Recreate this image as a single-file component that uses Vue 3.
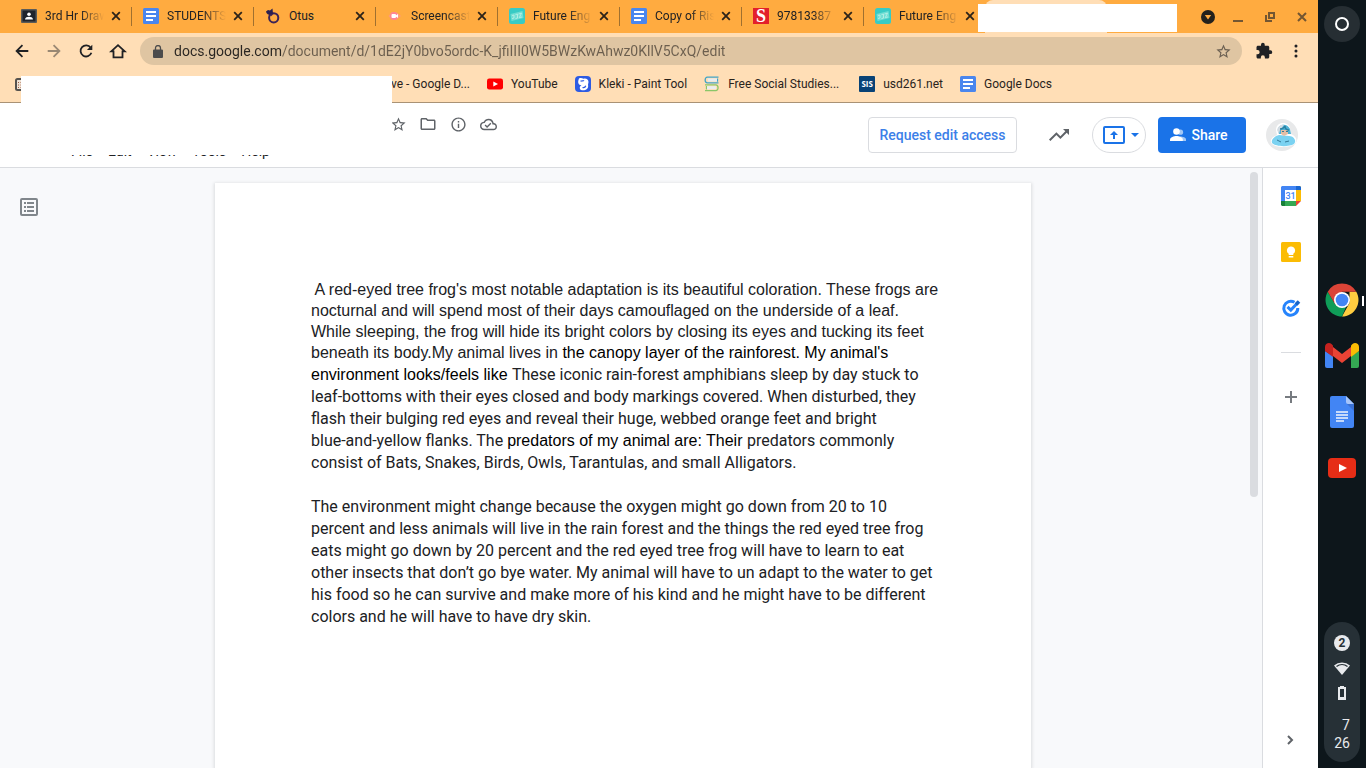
<template>
  <div class="screen">
    <!-- shared icon shapes -->
    <svg class="sprite" aria-hidden="true">
      <symbol id="classroom" viewBox="0 0 16 16">
        <rect y="1" width="16" height="14" rx="1" fill="#5b5b58" />
        <rect x="1.5" y="2.5" width="13" height="11" fill="#20242c" />
        <circle cx="8" cy="6.3" r="1.8" fill="#fff" />
        <path d="M4 11.5c0-2 2.4-2.7 4-2.7s4 .7 4 2.7z" fill="#fff" />
      </symbol>
      <symbol id="docs" viewBox="0 0 16 16">
        <rect width="16" height="16" rx="1.5" fill="#4a86ee" />
        <path d="M3 3h10v2H3zM3 7h10v2H3zM3 11h7v2H3z" fill="#fff" />
      </symbol>
      <symbol id="otus" viewBox="0 0 16 16">
        <circle cx="8.7" cy="9.8" r="4.6" fill="none" stroke="#3b2357" stroke-width="2" />
        <path d="M1 3.5 3 2l2 .5L7.5.5 8 5.5 5.5 7 3 6.5 1.5 5z" fill="#2b2050" />
        <path d="m4.5 6 4 .3-2.5 2z" fill="#3b2357" />
      </symbol>
      <symbol id="screencast" viewBox="0 0 16 16">
        <path d="m1.5 8 3-3.500h5L14 8l-4.500 3.500h-5z" fill="#ff9a7c" />
        <circle cx="7" cy="8" r="4" fill="#ff8592" />
        <rect x="4.5" y="6" width="4.5" height="4" rx="1" fill="#fff" />
        <path d="m8 8 3-2v4z" fill="#fff" />
      </symbol>
      <symbol id="future" viewBox="0 0 16 16">
        <rect width="16" height="16" rx="2.5" fill="#38cbc5" />
        <path d="m1.5 6 12-3 1 7-12 3z" fill="#71ded4" />
        <path d="m3 7.5 2-.5v3l-2 .6m3.5-4 2-.5v4l-2 .4m3-4.5 3-.8-2.2 4.4 2.6-.6" fill="none" stroke="#bff3e8" stroke-width=".8" />
      </symbol>
      <symbol id="youtube" viewBox="0 0 16 16">
        <rect y="2.5" width="16" height="11" rx="2.2" fill="#f00" />
        <path d="M6.3 5.5v5L11 8z" fill="#fff" />
      </symbol>
      <symbol id="kleki" viewBox="0 0 16 16">
        <rect width="16" height="16" rx="4" fill="#2d5be3" />
        <path d="M4 2.5c1.5-.8 3-.5 4.5.3 2.5-.8 5 .6 5 3.2 0 1.2-.7 2-.4 3.5.6 3.5-3 5.5-7.1 4.5-2-1.7-1.4-4 .8-4.8C3.5 9.5 2.2 6.5 4 2.5z" fill="#fff" />
        <path d="M5.5 5.2c1.5-1 2.5.2 3.5-.8M7.5 11.5c1.8.5 2.8-.2 3.3-1.7" fill="none" stroke="#2d5be3" stroke-width="1.2" />
      </symbol>
      <symbol id="books" viewBox="0 0 16 16">
        <path d="M14.5 1.2H3.4C.4 1.2.4 6.8 3.4 6.8h11.1M13.5 2.4v3.3" fill="none" stroke="#40a4c7" stroke-width="1.3" />
        <path d="M4 2.5h9v3H4z" fill="#e9edf0" />
        <path d="M1 8.8h10.8c3 0 3 5.8 0 5.8H1M2.5 10v3.4" fill="none" stroke="#8bc668" stroke-width="1.3" />
        <path d="M3 10.2h9v3H3z" fill="#e9edf0" />
      </symbol>
      <symbol id="site" viewBox="0 0 16 16">
        <rect x="2" y="3" width="14" height="11" rx="1.5" fill="#efe2d4" stroke="#55524e" stroke-width="2" />
        <path d="M4 6.5h8M4 9h8M4 11.5h8" stroke="#a05a40" stroke-dasharray="1 1.5" />
      </symbol>
      <symbol id="star" viewBox="0 0 24 24">
        <path d="m22 9.24-7.19-.62L12 2 9.19 8.63 2 9.24l5.46 4.73L5.82 21 12 17.27 18.18 21l-1.63-7.03zM12 15.4l-3.76 2.27 1-4.28-3.32-2.88 4.38-.38L12 6.1l1.71 4.04 4.38.38-3.32 2.88 1 4.28z" />
      </symbol>
    </svg>

    <div class="window">
      <div class="tab-strip">
        <div v-for="(tab, i) in tabs" :key="i" class="tab">
          <span v-if="tab.letters" :class="['favicon', tab.icon]">{{ tab.letters }}</span>
          <svg v-else class="favicon"><use :href="'#' + tab.icon" /></svg>
          <span :class="['tab-title', { short: tab.title.length < 6 }]">{{ tab.title }}</span>
          <button class="tab-close" aria-label="Close tab">
            <svg width="10" height="10" viewBox="0 0 10 10"><path d="m1.2 1.2 7.6 7.6m0-7.6L1.2 8.8" /></svg>
          </button>
        </div>
        <div class="tab active"></div>
        <div class="blank blank-tab"></div>
        <div class="window-controls">
          <button class="search-tabs" aria-label="Search tabs">
            <svg width="14" height="14" viewBox="0 0 14 14"><circle cx="7" cy="7" r="7" fill="#24211c" /><path d="M3.8 5h6.4L7 9.4z" fill="#ffab40" /></svg>
          </button>
          <button aria-label="Minimize"><svg width="10" height="10" viewBox="0 0 10 10"><path d="M0 9h10" /></svg></button>
          <button aria-label="Restore">
            <svg width="10" height="10" viewBox="0 0 10 10"><path d="M4 1h5v5H4zM1 3v6h6" /></svg>
          </button>
          <button aria-label="Close"><svg width="10" height="10" viewBox="0 0 10 10"><path d="m1 1 8 8m0-8L1 9" /></svg></button>
        </div>
      </div>

      <div class="toolbar">
        <button class="tool" aria-label="Back"><svg viewBox="0 0 20 20"><path d="M17 10H4m6.5-6.5L4 10l6.5 6.5" /></svg></button>
        <button class="tool dim" aria-label="Forward"><svg viewBox="0 0 20 20"><path d="M3 10h13M9.5 3.5 16 10l-6.5 6.5" /></svg></button>
        <button class="tool" aria-label="Reload">
          <svg viewBox="0 0 20 20"><path d="M15.2 6.3A6.2 6.2 0 1 0 16 12" /><path d="M17 3v6h-6z" class="solid" /></svg>
        </button>
        <button class="tool" aria-label="Home"><svg viewBox="0 0 20 20"><path d="m2.5 10.5 7.5-7 7.5 7H15V17H5v-6.5z" /></svg></button>
        <div class="omnibox">
          <svg class="lock" width="10" height="13" viewBox="0 0 10 13"><path d="M1 4.5h8a1 1 0 0 1 1 1V12a1 1 0 0 1-1 1H1a1 1 0 0 1-1-1V5.5a1 1 0 0 1 1-1z" /><path d="M2.5 5V3a2.5 2.5 0 0 1 5 0v2" fill="none" stroke="#4c4c4c" stroke-width="1.3" /></svg>
          <input v-model="url" class="url" type="text" aria-label="Address" spellcheck="false" />
          <button class="bookmark-star" aria-label="Bookmark this page"><svg width="17" height="17"><use href="#star" /></svg></button>
        </div>
        <button class="tool" aria-label="Extensions">
          <svg class="fill" viewBox="0 0 24 24"><path d="M20.5 11H19V7c0-1.1-.9-2-2-2h-4V3.5a2.5 2.5 0 0 0-5 0V5H4c-1.1 0-2 .9-2 2v3.8h1.5a2.7 2.7 0 0 1 0 5.4H2V20c0 1.1.9 2 2 2h3.8v-1.5a2.7 2.7 0 0 1 5.4 0V22H17c1.1 0 2-.9 2-2v-4h1.5a2.5 2.5 0 0 0 0-5z" /></svg>
        </button>
        <button class="tool" aria-label="Menu">
          <svg class="fill" viewBox="0 0 20 20"><circle cx="10" cy="4.5" r="1.7" /><circle cx="10" cy="10" r="1.7" /><circle cx="10" cy="15.5" r="1.7" /></svg>
        </button>
      </div>

      <nav class="bookmarks">
        <a v-for="mark in bookmarks" :key="mark.title" href="#" :class="['bookmark', mark.size]">
          <span v-if="mark.letters" :class="['favicon', mark.icon]">{{ mark.letters }}</span>
          <svg v-else class="favicon"><use :href="'#' + mark.icon" /></svg>
          <span class="mark-title">{{ mark.title }}</span>
        </a>
      </nav>

      <header class="doc-header">
        <div class="doc-left">
          <div class="doc-actions">
            <button aria-label="Star"><svg width="17" height="17"><use href="#star" /></svg></button>
            <button aria-label="Move">
              <svg width="18" height="18" viewBox="0 0 24 24"><path d="m9.17 6 2 2H20v10H4V6h5.17M10 4H4c-1.1 0-2 .9-2 2v12c0 1.1.9 2 2 2h16c1.1 0 2-.9 2-2V8c0-1.1-.9-2-2-2h-8z" /></svg>
            </button>
            <button aria-label="Details">
              <svg width="17" height="17" viewBox="0 0 24 24"><path d="M11 7h2v2h-2zm0 4h2v6h-2zm1-9C6.48 2 2 6.48 2 12s4.48 10 10 10 10-4.48 10-10S17.52 2 12 2zm0 18c-4.41 0-8-3.59-8-8s3.59-8 8-8 8 3.59 8 8-3.59 8-8 8z" /></svg>
            </button>
            <button aria-label="Document status">
              <svg width="17" height="17" viewBox="0 0 24 24"><path d="M19.35 10.04A7.49 7.49 0 0 0 12 4C9.11 4 6.6 5.64 5.35 8.04A5.994 5.994 0 0 0 0 14c0 3.31 2.69 6 6 6h13c2.76 0 5-2.24 5-5 0-2.64-2.05-4.78-4.65-4.96zM19 18H6c-2.21 0-4-1.79-4-4s1.79-4 4-4h.71C7.37 7.69 9.48 6 12 6c3.04 0 5.5 2.46 5.5 5.5v.5H19c1.66 0 3 1.34 3 3s-1.34 3-3 3zm-9-3.82-2.09-2.09L6.5 13.5 10 17l6.01-6.01-1.41-1.41z" /></svg>
            </button>
          </div>
          <div class="menu">
            <button v-for="item in menu" :key="item">{{ item }}</button>
          </div>
        </div>
        <button class="request">Request edit access</button>
        <button class="trend" aria-label="Activity">
          <svg width="24" height="24" viewBox="0 0 24 24"><path d="m16 6 2.29 2.29-4.88 4.88-4-4L2 16.59 3.41 18l6-6 4 4 6.3-6.29L22 12V6z" /></svg>
        </button>
        <button class="present" aria-label="Present">
          <svg width="22" height="18" viewBox="0 0 22 18"><rect x="1" y="1" width="20" height="16" rx="1" fill="none" stroke="#1a73e8" stroke-width="2" /><path d="M11 13V7" stroke="#1a73e8" stroke-width="2" /><path d="m7 9 4-4 4 4z" /></svg>
          <svg width="8" height="4" viewBox="0 0 8 4"><path d="M0 0h8L4 4z" /></svg>
        </button>
        <button class="share">
          <svg width="16" height="14" viewBox="0 0 16 14"><g opacity=".6"><circle cx="10.5" cy="4.2" r="2.6" /><path d="M10 8.5c3 0 6 1 6 3V13h-5z" /></g><circle cx="6.5" cy="3.5" r="3.3" /><path d="M0 13v-1.5C0 9.3 4 8 6.5 8s6.3 1.3 6.3 3.5V13z" /></svg>
          Share
        </button>
        <button class="avatar" aria-label="Account">
          <svg width="32" height="32" viewBox="0 0 32 32">
            <circle cx="16" cy="16" r="16" fill="#e8e9ea" />
            <path d="M10 11c0-9 12-9 14-2l1 6c5 2 7 6 4 10-6 4-19 4-23 0-3-4 0-7 5-9z" fill="#fff" />
            <path d="M6 24c-1-4 3-7 7-8l10 1c5 0 8 5 5 8-5 3-18 3-22-1z" fill="#7bd2f1" />
            <path d="M12 12c-1-7 9-9 12-2l1 5H13z" fill="#4eb2d5" />
            <path d="M11 11c1-4 4-6 7-5l-4 5-1 4z" fill="#d3dce3" />
            <path d="M15 11h7v4l-4 2-3-2z" fill="#e5bea6" />
            <path d="M14 10c3 0 4-1 5-3 0 3 2 4 4 4" fill="none" stroke="#2b81a2" stroke-width="1.5" />
            <path d="M16 12.5h2m2 0h2M11 21l4 2m8-1-4 1" stroke="#347b99" fill="none" />
          </svg>
        </button>
      </header>
      <div class="blank blank-title"></div>

      <div class="body">
        <main class="canvas">
          <div class="outline">
            <button aria-label="Show document outline">
              <svg width="18" height="18" viewBox="0 0 18 18" fill="none" stroke="#80868b"><rect x="1" y="1" width="16" height="16" rx="1" stroke-width="2" /><path d="M4 5h2m1 0h7M4 9h2m1 0h7M4 13h2m1 0h7" stroke-width="2" /></svg>
            </button>
          </div>
          <article class="sheet">
            <p v-for="(paragraph, p) in paragraphs" :key="p">
              <span v-for="(line, l) in paragraph" :key="l" :class="['line', { tight: p === 0 && l < 3 }]">
                <span v-for="(run, r) in line" :key="r" :class="run[0]">{{ run[1] }}</span>
              </span>
            </p>
          </article>
          <div></div>
          <div class="scrollbar"><div class="thumb"></div></div>
        </main>

        <aside class="side-panel">
          <button aria-label="Calendar">
            <svg width="20" height="20" viewBox="0 0 20 20"><path d="M1 0h14v4H4v12H0V1z" fill="#4285f4" /><path d="M15 0h4l1 1v14h-5z" fill="#fbbc04" /><path d="M15 0h4l1 1v3h-5z" fill="#1967d2" /><path d="M0 15h15v5H1l-1-1z" fill="#188038" /><path d="M4 15h11v5H4z" fill="#34a853" /><path d="M15 15h5l-5 5z" fill="#ea4335" /><path d="M4 4h11v11H4z" fill="#fff" /><text x="9.5" y="13" text-anchor="middle" class="calendar-day">31</text></svg>
          </button>
          <button aria-label="Keep">
            <svg width="20" height="20" viewBox="0 0 20 20"><rect width="20" height="20" rx="1.5" fill="#fbbc04" /><path d="M10 4.5a4 4 0 0 0-2.3 7.3V13h4.6v-1.2A4 4 0 0 0 10 4.5zM7.7 14h4.6v1.5H7.7z" fill="#fff" /></svg>
          </button>
          <button aria-label="Tasks">
            <svg width="20" height="20" viewBox="0 0 20 20" fill="none" stroke="#2684fc"><path d="M13.5 4.3A7 7 0 1 0 16.8 10" stroke-width="3" /><path d="m6.5 8.8 3.3 3.2L17 4.5" stroke-width="3" /><path d="m15 6.5 3-3" stroke="#1664c7" stroke-width="3.5" /></svg>
          </button>
          <hr />
          <button aria-label="Get add-ons"><svg width="12" height="12" viewBox="0 0 12 12"><path d="M6 0v12M0 6h12" stroke="#777b80" stroke-width="2" /></svg></button>
          <button class="collapse" aria-label="Hide side panel"><svg width="7" height="10" viewBox="0 0 7 10"><path d="m1 1 4 4-4 4" fill="none" stroke="#5f6368" stroke-width="2" /></svg></button>
        </aside>
      </div>
    </div>

    <aside class="shelf">
      <button class="launcher" aria-label="Launcher"><span></span></button>
      <div class="apps">
        <button class="running" aria-label="Chrome">
          <svg width="34" height="34" viewBox="0 0 34 34"><path d="M31.3 8.8A16.5 16.5 0 0 1 17 33.5L24.5 20V8.8z" fill="#ffcd40" /><path d="M17 33.5A16.5 16.5 0 0 1 2.7 8.8L10 21l11 3z" fill="#0f9d58" /><path d="M2.7 8.8A16.5 16.5 0 0 1 31.3 8.8H17L10 21z" fill="#db4437" /><circle cx="17" cy="17" r="8" fill="#fff" /><circle cx="17" cy="17" r="6.3" fill="#4285f4" /></svg>
        </button>
        <button aria-label="Gmail">
          <svg width="34" height="26" viewBox="0 0 34 26"><path d="M0 8v15a2 2 0 0 0 2 2h6V13z" fill="#4285f4" /><path d="M26 13v12h6a2 2 0 0 0 2-2V8z" fill="#34a853" /><path d="m8 4 9 7 9-7v9l-9 7-9-7z" fill="#ea4335" /><path d="M0 8V4c0-3.5 4-5 6.5-3L8 2.5V14z" fill="#c5221f" /><path d="M34 8V4c0-3.5-4-5-6.5-3L26 2.5V14z" fill="#fbbc04" /></svg>
        </button>
        <button aria-label="Docs">
          <svg width="24" height="32" viewBox="0 0 24 32"><path d="M2 0h14l8 8v22a2 2 0 0 1-2 2H2a2 2 0 0 1-2-2V2a2 2 0 0 1 2-2z" fill="#4285f4" /><path d="M16 0v6a2 2 0 0 0 2 2h6z" fill="#a6c5fa" /><path d="m17 8 7 7V8z" fill="#3970d2" /><path d="M6 16h12M6 19h12M6 22h12M6 25h8" stroke="#f1f5fd" stroke-width="1.5" /></svg>
        </button>
        <button aria-label="YouTube">
          <svg width="28" height="20" viewBox="0 0 28 20"><rect width="28" height="20" rx="4" fill="#e62d16" /><path d="m11 6 8 4-8 4z" fill="#fff" /></svg>
        </button>
      </div>
      <button class="status" aria-label="Status tray">
        <span class="badge">2</span>
        <svg width="16" height="13" viewBox="0 0 16 13"><path d="M0 3.5a12 12 0 0 1 16 0L8 13z" fill="#e8eaed" /><path d="M2.5 4.5a9 9 0 0 1 11 0" fill="none" stroke="#263036" stroke-width="1.3" /></svg>
        <svg width="10" height="14" viewBox="0 0 10 14"><path d="M3 0h4v1h2v13H1V1h2z" fill="#e8eaed" /><path d="M3 3h4v8H3z" fill="#263036" /></svg>
        <span class="clock">7<br />26</span>
      </button>
    </aside>
  </div>
</template>

<script setup>
import { ref } from 'vue'

const url = ref('docs.google.com/document/d/1dE2jY0bvo5ordc-K_jfiIII0W5BWzKwAhwz0KllV5CxQ/edit')

const tabs = [
  { icon: 'classroom', title: '3rd Hr Draw' },
  { icon: 'docs', title: 'STUDENTS' },
  { icon: 'otus', title: 'Otus' },
  { icon: 'screencast', title: 'Screencast' },
  { icon: 'future', title: 'Future Eng' },
  { icon: 'docs', title: 'Copy of Ris' },
  { icon: 'scholastic', letters: 'S', title: '97813387' },
  { icon: 'future', title: 'Future Eng' }
]

const bookmarks = [
  { icon: 'site', title: 've - Google D...', size: 'wide' },
  { icon: 'youtube', title: 'YouTube' },
  { icon: 'kleki', title: 'Kleki - Paint Tool' },
  { icon: 'books', title: 'Free Social Studies...', size: 'clipped' },
  { icon: 'sis', letters: 'SIS', title: 'usd261.net' },
  { icon: 'docs', title: 'Google Docs' }
]

const menu = ['File', 'Edit', 'View', 'Tools', 'Help']

// each line is a list of [font class, text] runs
const paragraphs = [
  [
    [['arial', " A red-eyed tree frog's most notable adaptation is its beautiful coloration. These frogs are"]],
    [['arial', 'nocturnal and will spend most of their days camouflaged on the underside of a leaf.']],
    [['arial', 'While sleeping, the frog will hide its bright colors by closing its eyes and tucking its feet']],
    [['arial', 'beneath its body.My animal lives in '], ['arial black', "the canopy layer of the rainforest. My animal's"]],
    [['arial black', 'environment looks/feels like '], ['roboto', 'These iconic rain-forest amphibians sleep by day stuck to']],
    [['roboto', 'leaf-bottoms with their eyes closed and body markings covered. When disturbed, they']],
    [['roboto', 'flash their bulging red eyes and reveal their huge, webbed orange feet and bright']],
    [['roboto', 'blue-and-yellow flanks. The '], ['arial black', 'predators of my animal are: Their '], ['roboto', 'predators commonly']],
    [['roboto', 'consist of Bats, Snakes, Birds, Owls, Tarantulas, and small Alligators.']]
  ],
  [
    [['roboto', 'The environment might change because the oxygen might go down from 20 to 10']],
    [['roboto', 'percent and less animals will live in the rain forest and the things the red eyed tree frog']],
    [['roboto', 'eats might go down by 20 percent and the red eyed tree frog will have to learn to eat']],
    [['roboto', 'other insects that don’t go bye water. My animal will have to un adapt to the water to get']],
    [['roboto', 'his food so he can survive and make more of his kind and he might have to be different']],
    [['roboto', 'colors and he will have to have dry skin.']]
  ]
]
</script>

<style>
body {
  margin: 0;
  overflow: hidden;
}
</style>

<style scoped>
.screen {
  display: flex;
  height: 100vh;
  font-family: Roboto, sans-serif;
  font-size: 12px;
  color: #202124;
}

.sprite {
  position: absolute;
  width: 0;
  height: 0;
}

button {
  display: flex;
  align-items: center;
  justify-content: center;
  flex: none;
  padding: 0;
  border: 0;
  background: none;
  font: inherit;
  color: inherit;
}

svg {
  flex: none;
}

.window {
  position: relative;
  display: flex;
  flex-direction: column;
  flex: 1;
  min-width: 0;
}

.favicon {
  flex: none;
  width: 16px;
  height: 16px;
  color: #fff;
  text-align: center;
}

.scholastic {
  background: #e3202b;
  font: bold 18px/16px "Liberation Serif", serif;
}

.sis {
  border-radius: 1px;
  background: #084276;
  font: bold 8px/16px "Open Sans", sans-serif;
}

.blank {
  position: absolute;
  background: #fff;
}

.blank-tab {
  left: 978px;
  top: 4px;
  width: 199px;
  height: 28px;
}

.blank-title {
  left: 21px;
  top: 76px;
  width: 371px;
  height: 79px;
}

/* tabs */
.tab-strip {
  display: flex;
  height: 33px;
  padding-left: 9px;
  background: #ffab40;
}

.tab {
  position: relative;
  display: flex;
  align-items: center;
  box-sizing: border-box;
  width: 122px;
  padding: 0 10px 1px 12px;
}

.tab:not(.active)::after {
  content: '';
  position: absolute;
  right: -1px;
  top: 7px;
  width: 1px;
  height: 19px;
  background: #a0702f;
}

.tab:nth-child(8)::after {
  display: none;
}

.tab.active {
  border-radius: 8px 8px 0 0;
  background: #ffdeb6;
}

.tab-title {
  flex: 1;
  margin-left: 8px;
  white-space: nowrap;
  mask-image: linear-gradient(to right, #000 35px, transparent 59px);
}

.tab-title.short {
  mask-image: none;
}

.tab-close svg {
  stroke: #2c2319;
  stroke-width: 1.8;
}

.window-controls {
  display: flex;
  margin-left: auto;
}

.window-controls button {
  width: 32px;
}

.window-controls .search-tabs {
  width: 28px;
}

.window-controls svg {
  fill: none;
  stroke: #735632;
  stroke-width: 2;
}

.window-controls .search-tabs svg {
  stroke: none;
}

/* address row */
.toolbar {
  display: flex;
  align-items: center;
  height: 36px;
  padding: 0 6px;
  background: #ffdeb6;
}

.tool {
  width: 32px;
  height: 28px;
}

.tool svg {
  width: 18px;
  height: 18px;
  fill: none;
  stroke: #202124;
  stroke-width: 2;
}

.tool .fill,
.tool .solid {
  fill: #202124;
  stroke: none;
}

.tool.dim {
  opacity: 0.45;
}

.omnibox {
  display: flex;
  align-items: center;
  flex: 1;
  height: 28px;
  margin: 0 6px;
  padding: 0 10px 0 13px;
  border-radius: 14px;
  background: #dfc5a2;
}

.lock {
  fill: #4c4c4c;
}

.url {
  flex: 1;
  min-width: 0;
  margin-left: 11px;
  padding: 0;
  border: 0;
  outline: 0;
  font: 14px/20px Roboto, sans-serif;
  color: transparent;
  background: linear-gradient(to right, #292521 107px, #6b5e4e 107px);
  background-clip: text;
}

.bookmark-star svg {
  fill: #6b6052;
}

/* bookmarks */
.bookmarks {
  display: flex;
  align-items: center;
  gap: 17px;
  box-sizing: border-box;
  height: 34px;
  padding: 0 14px 3px;
  background: #ffdeb6;
  border-bottom: 1px solid #a99275;
}

.bookmark {
  display: flex;
  align-items: center;
  gap: 8px;
  color: #29231c;
  text-decoration: none;
  white-space: nowrap;
}

.bookmark.wide {
  justify-content: space-between;
  width: 456px;
}

.wide .mark-title {
  width: 79px;
}

.bookmark.clipped {
  width: 138px;
}

/* document header */
.doc-header {
  display: flex;
  align-items: center;
  box-sizing: border-box;
  height: 65px;
  padding-right: 20px;
  background: #fff;
  border-bottom: 1px solid #dadce0;
}

.doc-left {
  flex: 1;
  align-self: stretch;
}

.doc-actions {
  display: flex;
  padding: 6px 0 0 383px;
}

.doc-actions button {
  width: 30px;
  height: 30px;
}

.doc-actions svg,
.trend svg {
  fill: #5f6368;
}

.menu {
  display: flex;
  gap: 15px;
  margin-top: 4px;
  padding-left: 71px;
  font-size: 14px;
  line-height: 16px;
}

.request {
  box-sizing: border-box;
  height: 36px;
  width: 149px;
  border: 1px solid #dadce0;
  border-radius: 4px;
  font-size: 14px;
  font-weight: 500;
  color: #3c80e8;
}

.trend {
  width: 36px;
  margin: 0 15px 0 24px;
}

.present {
  box-sizing: border-box;
  gap: 6px;
  width: 54px;
  height: 36px;
  padding-left: 4px;
  border: 1px solid #dadce0;
  border-radius: 18px;
}

.present svg {
  fill: #1a73e8;
}

.share {
  box-sizing: border-box;
  gap: 5px;
  width: 88px;
  height: 36px;
  margin: 0 20px 0 12px;
  padding-right: 6px;
  border-radius: 4px;
  background: #1a73e8;
  color: #fff;
  font-size: 14px;
  font-weight: 500;
}

.share svg {
  fill: #fff;
}

/* document */
.body {
  display: flex;
  flex: 1;
  min-height: 0;
}

.canvas {
  display: grid;
  grid-template-columns: minmax(0, 1fr) 816px minmax(0, 1fr) 16px;
  flex: 1;
  background: #f8f9fb;
}

.outline {
  padding: 30px 0 0 20px;
}

.sheet {
  box-sizing: border-box;
  margin-top: 15px;
  padding: 96px;
  background: #fff;
  box-shadow: 0 1px 3px 1px rgba(60, 64, 67, 0.15);
  font-size: 16px;
}

.sheet p {
  margin: 0 0 22px;
}

.line {
  display: block;
  height: 22px;
  line-height: 22px;
  white-space: pre;
}

.line.tight {
  height: 21px;
  line-height: 21px;
}

.arial {
  font-family: "Liberation Sans", Arial, sans-serif;
}

.roboto {
  font-family: Roboto, sans-serif;
}

.black {
  color: #000;
}

.scrollbar {
  padding: 4px 4px 0;
}

.thumb {
  height: 325px;
  border-radius: 4px;
  background: #dadce0;
}

.side-panel {
  display: flex;
  flex-direction: column;
  align-items: center;
  width: 55px;
  background: #fff;
  border-left: 1px solid #dadce0;
}

.side-panel button {
  width: 55px;
  height: 56px;
}

.side-panel hr {
  width: 20px;
  height: 1px;
  margin: 16px 0;
  border: 0;
  background: #dadce0;
}

.side-panel .collapse {
  margin-top: auto;
}

.calendar-day {
  font: 500 9px Roboto, sans-serif;
  fill: #4285f4;
}

/* system shelf */
.shelf {
  display: flex;
  flex-direction: column;
  align-items: center;
  justify-content: space-between;
  box-sizing: border-box;
  width: 48px;
  padding: 6px 0;
  background: #0d161b;
}

.launcher {
  width: 36px;
  height: 36px;
  border-radius: 50%;
  background: #262e33;
}

.launcher span {
  width: 10px;
  height: 10px;
  border: 2px solid #fff;
  border-radius: 50%;
}

.apps {
  margin-top: 104px;
}

.apps button {
  position: relative;
  width: 48px;
  height: 56px;
}

.running::after {
  content: '';
  position: absolute;
  right: 2px;
  top: 24px;
  width: 2px;
  height: 10px;
  background: #fff;
}

.status {
  flex-direction: column;
  gap: 11px;
  box-sizing: border-box;
  width: 36px;
  height: 140px;
  padding-top: 2px;
  border-radius: 18px;
  background: #263036;
  color: #e8eaed;
}

.badge {
  width: 16px;
  border-radius: 50%;
  background: #e8eaed;
  color: #263036;
  font-size: 12px;
  font-weight: 700;
  line-height: 16px;
}

.clock {
  margin-top: 5px;
  font-size: 14px;
  line-height: 18px;
  text-align: right;
}
</style>
